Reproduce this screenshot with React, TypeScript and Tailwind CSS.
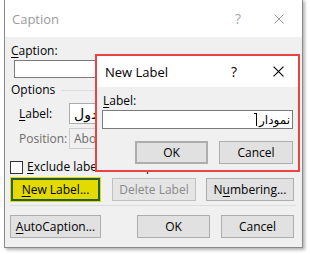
import React from 'react'

function CloseIcon({ className }: { className: string }) {
  return (
    <svg className={className} viewBox="0 0 10 10" fill="none" stroke="currentColor" strokeWidth={1}>
      <path d="M0.5 0.5L9.5 9.5M9.5 0.5L0.5 9.5" />
    </svg>
  )
}

function Btn({ children, className = '' }: { children: React.ReactNode; className?: string }) {
  return (
    <div
      className={`flex h-[23px] items-center justify-center border border-[#adadad] bg-[#e1e1e1] text-[12px] text-black ${className}`}
    >
      {children}
    </div>
  )
}

export default function App() {
  return (
    <div className="relative h-[254px] w-[310px] overflow-hidden bg-white font-['Open_Sans','Noto_Sans','DejaVu_Sans',sans-serif] text-[12px] leading-[16px] text-black">
      {/* Caption dialog */}
      <div className="-mt-px ml-[4px] flex h-[249px] w-[299px] flex-col border border-[#8a8a8a] bg-[#f0f0f0] shadow-[2px_2px_3px_rgba(0,0,0,0.3)]">
        <div className="flex h-[37px] items-center bg-white pl-[7px] pr-[18px]">
          <span className="text-[13px] text-[#9b9b9b]">Caption</span>
          <span className="ml-auto text-[14px] text-[#a8a8a8]">?</span>
          <CloseIcon className="ml-[33px] h-[10px] w-[10px] text-[#9b9b9b]" />
        </div>

        <div className="flex flex-col px-[5px] pt-[6px]">
          <div className="pl-[1px]">
            <span className="underline underline-offset-2">C</span>aption:
          </div>
          <div className="ml-[4px] mt-px h-[18px] w-[280px] border border-[#7a7a7a] bg-white" />

          <div className="mt-[4px] flex items-center gap-[6px] pl-[1px]">
            <span>Options</span>
            <div className="h-px flex-1 bg-[#dcdcdc]" />
          </div>

          <div className="mt-[5px] flex items-center">
            <span className="w-[59px] pl-[9px]">
              <span className="underline underline-offset-2">L</span>abel:
            </span>
            <div className="flex h-[21px] w-[221px] items-center border border-[#acacac] bg-white pl-[4px] font-['DejaVu_Sans',sans-serif] text-[14px]">
              جدول
            </div>
          </div>

          <div className="mt-[4px] flex items-center">
            <span className="w-[59px] pl-[9px] text-[#6d6d6d]">Position:</span>
            <div className="flex h-[21px] w-[221px] items-center border border-[#cccccc] bg-[#f0f0f0] pl-[4px] text-[#6d6d6d]">
              Above selected item
            </div>
          </div>

          <div className="mt-[10px] flex items-center gap-[4px]">
            <div className="h-[13px] w-[13px] border border-[#333333] bg-white" />
            <span>
              <span className="underline underline-offset-2">E</span>xclude label from caption
            </span>
          </div>

          <div className="mt-[2px] flex items-center">
            <div className="w-[91px] bg-[#e3da00] p-px">
              <div className="flex h-[23px] items-center justify-center border-2 border-[#255e2e] bg-[#e3da00]">
                <span>
                  <span className="underline underline-offset-2">N</span>ew Label...
                </span>
              </div>
            </div>
            <Btn className="ml-[11px] w-[84px] border-[#bfbfbf] bg-[#e5e5e5] !text-[#8a8a8a]">Delete Label</Btn>
            <Btn className="ml-[10px] w-[88px]">
              <span>
                N<span className="underline underline-offset-2">u</span>mbering...
              </span>
            </Btn>
          </div>

          <div className="mt-[3px] h-px w-[286px] bg-[#dcdcdc]" />

          <div className="mt-[9px] flex items-center">
            <Btn className="w-[91px]">
              <span>
                <span className="underline underline-offset-2">A</span>utoCaption...
              </span>
            </Btn>
            <Btn className="ml-[36px] w-[73px]">OK</Btn>
            <Btn className="ml-[11px] w-[73px]">Cancel</Btn>
          </div>
        </div>
      </div>

      {/* New Label dialog window */}
      <div className="absolute left-[95px] top-[54px] flex h-[118px] w-[205px] flex-col border-2 border-[#ec4242] bg-[#f0f0f0]">
        <div className="flex h-[31px] items-center bg-white pl-[8px] pr-[14px]">
          <span className="text-[13px]">New Label</span>
          <span className="ml-auto text-[14px]">?</span>
          <CloseIcon className="ml-[36px] h-[11px] w-[11px] text-black" />
        </div>
        <div className="flex flex-col px-[5px] pt-[6px]">
          <div className="pl-px">
            <span className="underline underline-offset-2">L</span>abel:
          </div>
          <div className="mt-px flex h-[19px] w-[191px] items-center justify-end border border-[#7a7a7a] bg-white pr-[2px]">
            <span className="relative mr-[2px] h-[13px] w-px bg-black">
              <span className="absolute left-[-2px] top-0 h-px w-[2px] bg-black" />
            </span>
            <span dir="rtl" className="font-['DejaVu_Sans',sans-serif] text-[12px]">
              نمودار
            </span>
          </div>
          <div className="mt-[12px] flex items-center">
            <Btn className="ml-[33px] w-[73px] border-2 border-[#0078d7]">OK</Btn>
            <Btn className="ml-[11px] w-[74px]">Cancel</Btn>
          </div>
        </div>
      </div>
    </div>
  )
}
